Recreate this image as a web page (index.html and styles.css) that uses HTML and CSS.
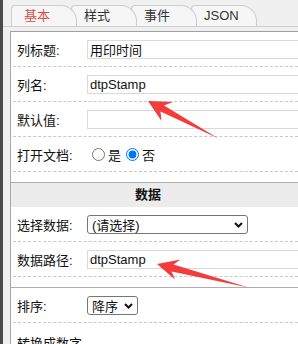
FILE: index.html
```html
<!DOCTYPE html>
<html lang="zh">
<head>
<meta charset="utf-8">
<link rel="stylesheet" href="styles.css">
</head>
<body>
<div class="app">
  <div class="edge"></div>
  <div class="main">
    <div class="tabs">
      <div class="tab active">基本</div>
      <div class="tab t2">样式</div>
      <div class="tab t3">事件</div>
      <div class="tab t4">JSON</div>
    </div>
    <div class="panel">
      <div class="section">
        <div class="row"><span class="lbl">列标题:</span><input class="field" value="用印时间"></div>
        <div class="row"><span class="lbl">列名:</span><input class="field" value="dtpStamp"></div>
        <div class="row"><span class="lbl">默认值:</span><input class="field" value=""></div>
        <div class="row"><span class="lbl">打开文档:</span><span class="radios"><input type="radio" name="open">是 <input type="radio" name="open" checked>否</span></div>
      </div>
      <div class="section bordered">
        <div class="head">数据</div>
        <div class="row"><span class="lbl">选择数据:</span><div class="select wide"><span>(请选择)</span><svg class="chev" width="9" height="6" viewBox="0 0 9 6"><path d="M1 1L4.5 4.5L8 1" fill="none" stroke="#111" stroke-width="2"/></svg></div></div>
        <div class="row"><span class="lbl">数据路径:</span><input class="field" value="dtpStamp"></div>
      </div>
      <div class="section bordered">
        <div class="row"><span class="lbl">排序:</span><div class="select narrow"><span>降序</span><svg class="chev" width="9" height="6" viewBox="0 0 9 6"><path d="M1 1L4.5 4.5L8 1" fill="none" stroke="#111" stroke-width="2"/></svg></div></div>
        <div class="row-plain"><span class="lbl">转换成数字</span></div>
      </div>
    </div>
  </div>
</div>
<svg class="arrows" width="298" height="344" viewBox="0 0 298 344">
  <polygon points="148,101 173,102 164,105.5 218.5,138.5 160.5,111.5 161.5,121" fill="#f33c3c"/>
  <polygon points="157,264 180.5,259.5 173.5,264.5 248.5,287.5 171.5,271.5 175,279.5" fill="#f33c3c"/>
</svg>
</body>
</html>
```
FILE: styles.css
```css
html, body {
  margin: 0;
  padding: 0;
  height: 344px;
  overflow: hidden;
}
body {
  background: #f0f0f0;
  font-family: "Liberation Sans", "Noto Sans CJK SC", sans-serif;
  font-size: 13px;
  color: #111;
  position: relative;
}
.app {
  display: flex;
  height: 344px;
}
.edge {
  width: 3px;
  background: #4a4a4a;
  flex: none;
}
.main {
  flex: 1;
  min-width: 0;
  padding-left: 7px;
}
.tabs {
  display: flex;
  padding-top: 5px;
  padding-left: 1px;
  border-bottom: 1px solid #cfcfcf;
  margin-bottom: 4px;
  margin-left: -7px;
  padding-left: 8px;
}
.tab {
  position: relative;
  width: 66px;
  height: 21px;
  box-sizing: border-box;
  border: 1px solid #cdcdcd;
  border-bottom: none;
  border-radius: 4px 16px 0 0;
  background: #f6f6f6;
  margin-right: -6px;
  padding-left: 12px;
  line-height: 20px;
  color: #333;
}
.tab.active { color: #d4534b; z-index: 4; }
.t2 { z-index: 3; }
.t3 { z-index: 2; }
.t4 { z-index: 1; }
.panel {
  background: #fff;
  border-left: 1px solid #a8a8a8;
  border-top: 1px solid #a0a0a0;
  height: 400px;
}
.section {
  padding-bottom: 10px;
}
.section.bordered {
  border-top: 1px solid #adadad;
}
.head {
  height: 24px;
  line-height: 24px;
  background: #ececec;
  text-align: center;
  font-weight: bold;
  padding-right: 13px;
}
.row {
  display: flex;
  align-items: center;
  height: 35px;
  box-sizing: border-box;
  padding-top: 1px;
  margin-left: 2px;
  padding-left: 4px;
  border-bottom: 1px dashed #c8c8c8;
  white-space: nowrap;
}
.row-plain {
  margin-left: 2px;
  padding-left: 4px;
  padding-top: 12px;
  line-height: 18px;
}
.lbl {
  width: 70px;
  flex: none;
}
.field {
  flex: none;
  width: 240px;
  height: 19px;
  box-sizing: border-box;
  border: 1px solid #d9d9d9;
  padding: 0 2px;
  margin: 0;
  font-family: "Liberation Sans", "Noto Sans CJK SC", sans-serif;
  font-size: 13px;
  color: #111;
  outline: none;
}
.radios {
  display: flex;
  align-items: center;
}
.radios input {
  width: 13px;
  height: 13px;
  margin: 0 3px 0 5px;
}
.select {
  flex: none;
  display: flex;
  align-items: center;
  justify-content: space-between;
  height: 19px;
  box-sizing: border-box;
  border: 1px solid #767676;
  border-radius: 3px;
  padding: 0 4px 0 4px;
}
.select.wide { width: 161px; }
.select.narrow { width: 51px; }
.chev { flex: none; }
.arrows {
  position: absolute;
  left: 0;
  top: 0;
  pointer-events: none;
}
```
